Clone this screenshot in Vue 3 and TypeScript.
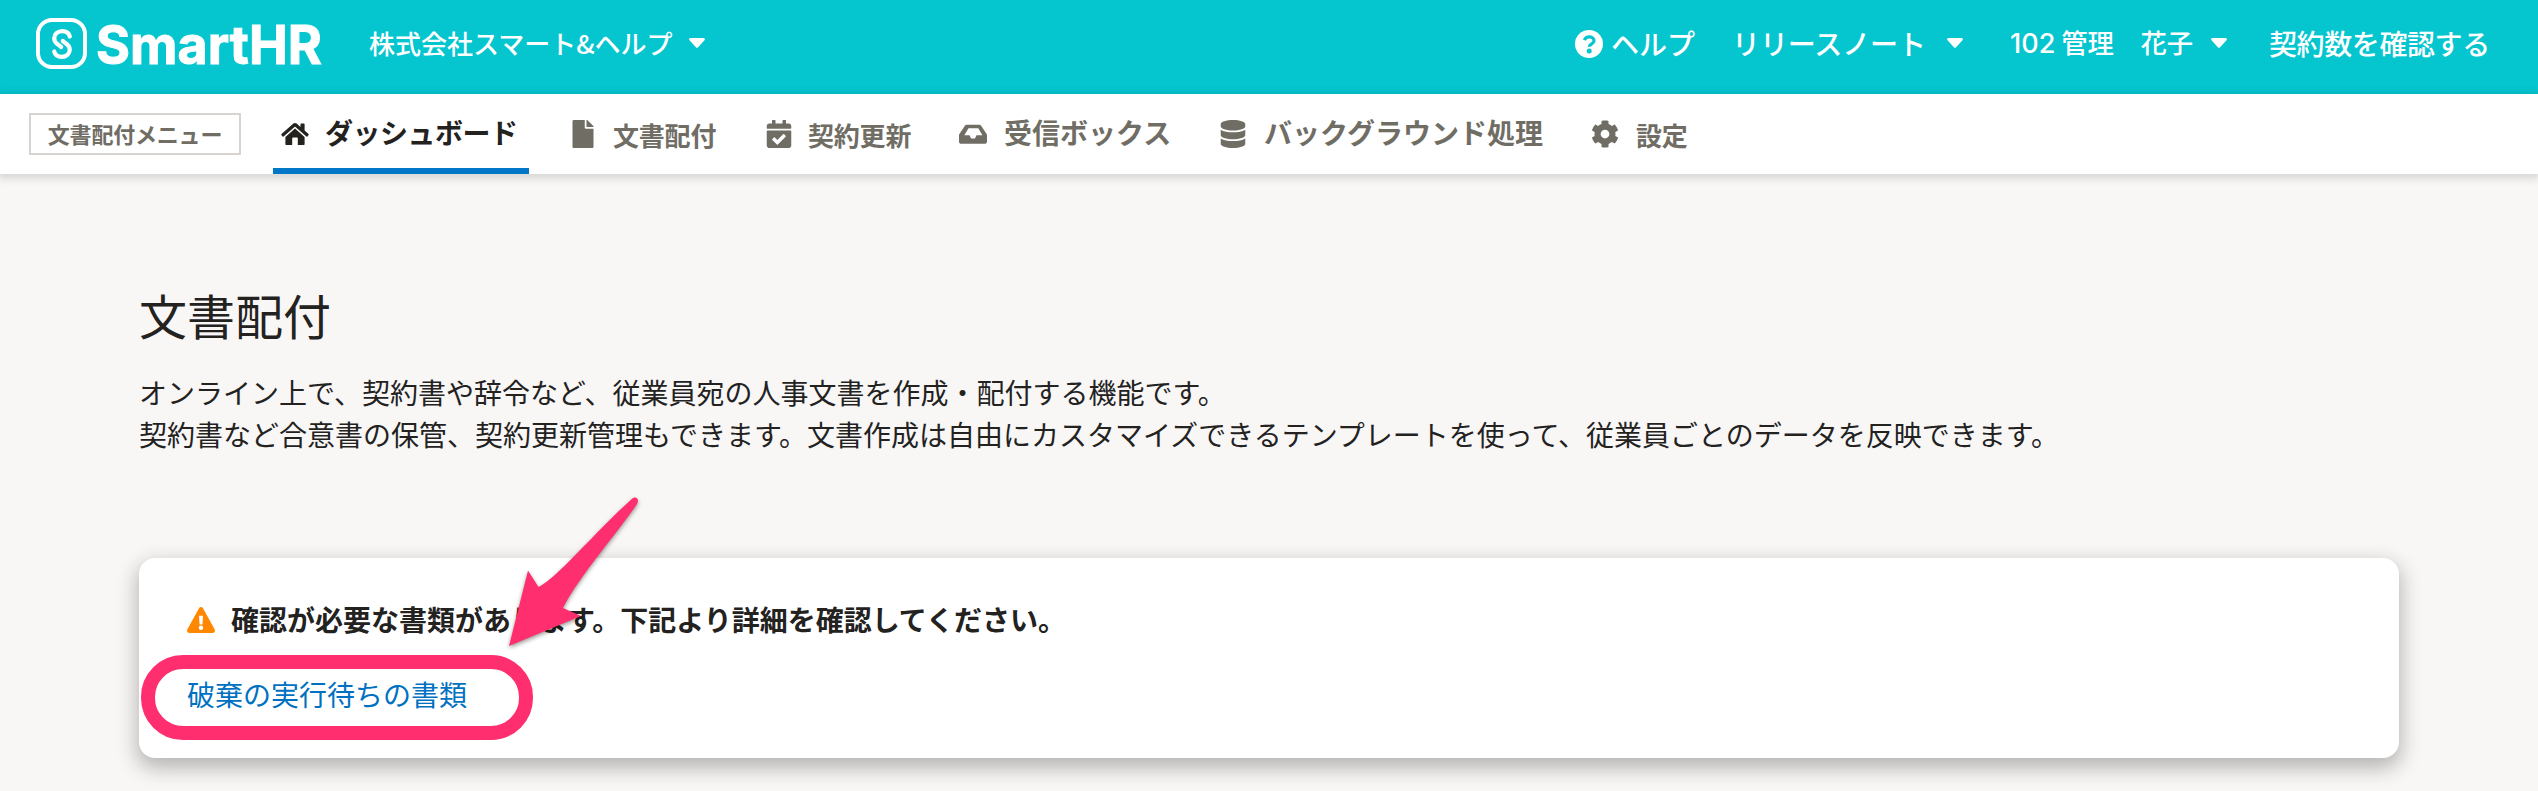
<script setup lang="ts">
interface NavItem {
  key: string
  label: string
  icon: string
  viewBox: string
  active?: boolean
}

const navItems: NavItem[] = [
  {
    key: 'dashboard',
    label: 'ダッシュボード',
    viewBox: '0 0 28 28',
    icon: 'M14 8.6 4.4 17v7.2c0 .5.3.8.8.8h6v-6.6c0-.5.3-.8.8-.8h4c.5 0 .8.3.8.8V25h6c.5 0 .8-.3.8-.8V17zM27.5 14 23.6 10.600V4.300c0-.4-.3-.7-.7-.7h-2.700c-.4 0-.7.3-.7.7v2.700l-3.900-3.400c-.9-.8-2.300-.8-3.200 0L.5 14c-.3.3-.3.7-.1 1l1.200 1.500c.3.3.7.3 1 .1L13.500 7c.3-.3.7-.3 1 0l10.900 9.600c.3.2.7.2 1-.1l1.200-1.500c.2-.3.2-.7-.1-1z',
    active: true,
  },
  {
    key: 'documents',
    label: '文書配付',
    viewBox: '0 0 384 512',
    icon: 'M224 136V0H24C10.700 0 0 10.700 0 24v464c0 13.300 10.700 24 24 24h336c13.300 0 24-10.700 24-24V160H248c-13.200 0-24-10.800-24-24zm160-14.100v6.100H256V0h6.100c6.400 0 12.500 2.500 17 7l97.900 98c4.500 4.500 7 10.600 7 16.900z',
  },
  {
    key: 'renewal',
    label: '契約更新',
    viewBox: '0 0 448 512',
    icon: 'M436 160H12c-6.600 0-12-5.400-12-12v-36c0-26.500 21.500-48 48-48h48V12c0-6.600 5.400-12 12-12h40c6.600 0 12 5.400 12 12v52h128V12c0-6.600 5.400-12 12-12h40c6.600 0 12 5.400 12 12v52h48c26.500 0 48 21.500 48 48v36c0 6.600-5.400 12-12 12zM12 192h424c6.600 0 12 5.400 12 12v260c0 26.500-21.500 48-48 48H48c-26.500 0-48-21.500-48-48V204c0-6.600 5.400-12 12-12zm333.300 95.900-28.200-28.400c-4.700-4.700-12.300-4.700-17-.1L194 364.900l-46.200-46.500c-4.700-4.700-12.300-4.700-17-.1l-28.400 28.200c-4.700 4.700-4.700 12.300-.1 17l82.600 83.300c4.700 4.700 12.300 4.700 17 .1l143.300-142.100c4.700-4.700 4.700-12.300.1-16.900z',
  },
  {
    key: 'inbox',
    label: '受信ボックス',
    viewBox: '0 0 576 512',
    icon: 'M567.900 243.900 462.200 85.400C450.300 67.600 430.300 56.900 408.900 56.900H167.100c-21.400 0-41.400 10.700-53.300 28.500L8.100 243.900A48 48 0 0 0 0 270.500V400c0 26.500 21.500 48 48 48h480c26.500 0 48-21.500 48-48V270.500c0-9.500-2.800-18.700-8.100-26.600zM360 272l-32 64h-80l-32-64h-106l85-144h202l85 144z',
  },
  {
    key: 'background',
    label: 'バックグラウンド処理',
    viewBox: '0 0 448 512',
    icon: 'M448 73.100v45.800C448 159.100 347.700 192 224 192S0 159.100 0 118.900V73.100C0 32.900 100.300 0 224 0s224 32.900 224 73.100zM448 176v102.900C448 319.100 347.700 352 224 352S0 319.100 0 278.900V176c48.100 33.100 136.200 48.600 224 48.600S399.900 209.100 448 176zm0 160v102.900C448 479.100 347.700 512 224 512S0 479.100 0 438.900V336c48.100 33.100 136.200 48.600 224 48.600S399.900 369.100 448 336z',
  },
  {
    key: 'settings',
    label: '設定',
    viewBox: '0 0 512 512',
    icon: 'M487.400 315.700l-42.600-24.600c4.300-23.200 4.300-47 0-70.200l42.600-24.600c4.900-2.800 7.100-8.600 5.500-14-11.100-35.600-30-67.800-54.700-94.600-3.800-4.100-10-5.100-14.800-2.300L380.800 110c-17.900-15.400-38.500-27.300-60.800-35.100V25.800c0-5.600-3.900-10.500-9.400-11.700-36.700-8.200-74.300-7.800-109.200 0-5.500 1.200-9.400 6.100-9.400 11.700V75c-22.200 7.900-42.800 19.800-60.800 35.100L88.700 85.500c-4.900-2.800-11-1.900-14.800 2.300-24.700 26.700-43.600 58.900-54.700 94.600-1.700 5.400.6 11.200 5.500 14L67.300 221c-4.300 23.200-4.300 47 0 70.200l-42.600 24.600c-4.900 2.800-7.100 8.600-5.500 14 11.100 35.600 30 67.800 54.700 94.600 3.800 4.100 10 5.100 14.800 2.300l42.600-24.600c17.900 15.400 38.500 27.300 60.800 35.100v49.200c0 5.600 3.900 10.500 9.400 11.700 36.700 8.200 74.300 7.800 109.200 0 5.500-1.200 9.400-6.100 9.400-11.700v-49.200c22.200-7.900 42.800-19.800 60.800-35.100l42.600 24.600c4.900 2.800 11 1.900 14.800-2.300 24.700-26.700 43.600-58.900 54.700-94.600 1.500-5.500-.7-11.300-5.600-14.100zM256 336c-44.100 0-80-35.900-80-80s35.900-80 80-80 80 35.900 80 80-35.900 80-80 80z',
  },
]
</script>

<template>
  <div class="page">
    <header class="header">
      <svg class="logo" width="290" height="80" viewBox="0 -10 290 80" role="img">
        <rect x="2" y="4" width="47" height="47" rx="14" fill="none" stroke="#fff" stroke-width="4" />
        <g fill="none" stroke="#fff" stroke-width="4.200" stroke-linecap="round">
          <path d="M33.800 20.500c-.8-3.200-3.800-5.300-7.500-5.300-4.600 0-8.100 3-8.100 7 0 2.600 1.200 4.400 3.400 6l3.600 2.800" />
          <path d="M18.200 35.500c.8 3.200 3.800 5.300 7.500 5.300 4.600 0 8.100-3 8.100-7 0-2.600-1.200-4.400-3.400-6l-3.600-2.800" />
        </g>
        <text class="logo-text" x="60" y="48" textLength="226" lengthAdjust="spacingAndGlyphs">SmartHR</text>
      </svg>
      <button class="header-item company">
        <span>株式会社スマート&amp;ヘルプ</span>
        <svg class="caret" viewBox="0 0 16 10"><path d="M1.500 0h13c1.200 0 1.900 1.300 1 2.200l-6.400 7a1.500 1.500 0 0 1-2.200 0l-6.400-7C-.4 1.300.3 0 1.500 0z" /></svg>
      </button>
      <a class="header-item help">
        <svg class="help-icon" viewBox="0 0 28 28">
          <circle cx="14" cy="14" r="14" fill="#fff" />
          <path d="M9.400 10.200C10.300 7.900 11.900 6.800 14.200 6.800c2.700 0 4.800 1.600 4.800 4 0 3.300-4.700 3.400-4.700 5.900" fill="none" stroke="#05c5cf" stroke-width="3.200" />
          <circle cx="14.200" cy="21" r="2.500" fill="#05c5cf" />
        </svg>
        <span>ヘルプ</span>
      </a>
      <button class="header-item release">
        <span>リリースノート</span>
        <svg class="caret" viewBox="0 0 16 10"><path d="M1.500 0h13c1.200 0 1.900 1.300 1 2.200l-6.400 7a1.500 1.500 0 0 1-2.200 0l-6.400-7C-.4 1.300.3 0 1.500 0z" /></svg>
      </button>
      <button class="header-item user">
        <span><span class="number">102</span> 管理　花子</span>
        <svg class="caret" viewBox="0 0 16 10"><path d="M1.500 0h13c1.200 0 1.900 1.300 1 2.200l-6.400 7a1.500 1.500 0 0 1-2.200 0l-6.400-7C-.4 1.300.3 0 1.500 0z" /></svg>
      </button>
      <a class="header-item contract"><span>契約数を確認する</span></a>
    </header>

    <nav class="nav">
      <span class="nav-title">文書配付メニュー</span>
      <a v-for="item in navItems" :key="item.key" class="nav-item" :class="[item.key, { active: item.active }]">
        <svg class="nav-icon" :viewBox="item.viewBox"><path :d="item.icon" fill-rule="evenodd" /></svg>
        <span class="nav-label">{{ item.label }}</span>
      </a>
    </nav>

    <main class="main">
      <h1>文書配付</h1>
      <p class="lead">
        オンライン上で、契約書や辞令など、従業員宛の人事文書を作成・配付する機能です。<br />契約書など合意書の保管、契約更新管理もできます。文書作成は自由にカスタマイズできるテンプレートを使って、従業員ごとのデータを反映できます。
      </p>
      <section class="card">
        <div class="notice">
          <svg class="warning" viewBox="0 0 28 26">
            <path d="M16 1.200a2.300 2.300 0 0 0-4 0L.4 22.300C-.6 24 .6 26 2.400 26h23.200c1.800 0 3-2 2-3.700z" fill="#ff8800" />
            <path d="M12 8.800h4l-.5 8.600h-3z" fill="#fff" />
            <circle cx="14" cy="20.800" r="2.200" fill="#fff" />
          </svg>
          <span class="notice-text">確認が必要な書類があります。下記より詳細を確認してください。</span>
        </div>
        <a class="link">破棄の実行待ちの書類</a>
        <div class="highlight"></div>
        <svg class="arrow" width="160" height="170" viewBox="0 0 160 170">
          <path d="M9 156 28 80.500 38.500 97C56 89 96 41 131.500 9.200c4-4 8.500-.3 5.500 4.800C116 45 80 85 63 118l18 8z" fill="#ff2e6e" />
        </svg>
      </section>
    </main>
  </div>
</template>

<style>
body {
  margin: 0;
  background: #f8f7f6;
}
</style>

<style scoped>
.page {
  box-sizing: border-box;
  width: 2538px;
  height: 791px;
  overflow: hidden;
  background: #f8f7f6;
  color: #23221f;
  font-family: 'Noto Sans CJK JP', sans-serif;
  font-size: 28px;
  white-space: nowrap;
}

.header {
  display: flex;
  align-items: center;
  box-sizing: border-box;
  height: 94px;
  padding: 0 47px 6px 36px;
  background: #05c5cf;
  color: #fff;
}

.logo {
  display: block;
  flex: none;
  margin-top: 4px;
}

.logo-text {
  font-family: Inter, sans-serif;
  font-weight: 700;
  font-size: 53px;
  fill: #fff;
  stroke: #fff;
  stroke-width: 1px;
}

.header-item {
  display: flex;
  align-items: center;
  flex: none;
  padding: 0;
  border: 0;
  background: none;
  color: #fff;
  font-family: inherit;
  font-size: 28px;
  font-weight: 500;
  line-height: 40px;
}

.header-item > span {
  margin-top: -3px;
}

.caret {
  width: 16px;
  height: 10px;
  margin-top: -2px;
  fill: #fff;
}

.company {
  width: 336px;
  margin-left: 43px;
  justify-content: space-between;
  font-size: 26px;
}

.help {
  width: 126px;
  margin-left: auto;
  gap: 8px;
}

.help-icon {
  width: 28px;
  height: 28px;
  flex: none;
}

.release {
  width: 231px;
  margin-left: 31px;
  margin-right: 2px;
  justify-content: space-between;
  letter-spacing: -0.1px;
}

.user {
  width: 217px;
  margin-left: 45px;
  justify-content: space-between;
  font-size: 26.4px;
}

.number {
  font-family: Inter, sans-serif;
  font-size: 27px;
}

.contract {
  width: 222px;
  margin-left: 42px;
  letter-spacing: -0.4px;
}

.nav {
  display: flex;
  align-items: center;
  position: relative;
  box-sizing: border-box;
  height: 80px;
  padding-left: 29px;
  background: #fff;
  box-shadow: 0 2px 8px 2px rgba(30, 28, 25, 0.16);
  color: #706d65;
  font-weight: 700;
}

.nav-title {
  box-sizing: border-box;
  width: 212px;
  height: 42px;
  border: 2px solid #d6d3d0;
  font-size: 22px;
  line-height: 36px;
  text-align: center;
  letter-spacing: -0.2px;
}

.nav-item {
  display: flex;
  align-items: center;
  box-sizing: border-box;
  height: 80px;
  font-size: 28px;
}

.nav-icon {
  flex: none;
  height: 28px;
  fill: currentColor;
}

.nav-label {
  line-height: 40px;
  margin-top: -4px;
}

.dashboard {
  width: 256px;
  margin-left: 32px;
  padding-left: 8px;
  border-bottom: 6px solid #0077c7;
  border-top: 6px solid transparent;
  letter-spacing: -0.5px;
}

.active {
  color: #23221f;
}

.dashboard .nav-icon {
  width: 28px;
  margin-right: 16px;
}

.documents {
  margin-left: 43px;
  width: 145px;
  font-size: 26px;
}

.documents .nav-icon {
  width: 22px;
  margin-right: 19px;
}

.renewal {
  width: 146px;
  margin-left: 49px;
  font-size: 26px;
}

.renewal .nav-icon {
  width: 26px;
  margin-right: 16px;
}

.inbox {
  width: 211px;
  margin-left: 47px;
}

.inbox .nav-icon {
  width: 28px;
  height: 25px;
  margin-right: 17px;
}

.background {
  width: 325px;
  margin-left: 50px;
}

.background .nav-icon {
  width: 26px;
  margin-right: 18px;
}

.settings {
  margin-left: 46px;
  font-size: 26px;
}

.settings .nav-icon {
  width: 28px;
  margin-right: 17px;
}

.documents .nav-label,
.renewal .nav-label,
.settings .nav-label {
  margin-top: 1px;
  letter-spacing: -0.2px;
}

.main {
  padding: 105px 139px 0;
}

h1 {
  margin: 0;
  font-size: 48px;
  font-weight: 400;
  line-height: 70px;
}

.lead {
  margin: 22px 0 0;
  line-height: 42px;
}

.card {
  position: relative;
  box-sizing: border-box;
  width: 2260px;
  height: 200px;
  margin-top: 103px;
  padding: 42px 48px 0;
  border-radius: 16px;
  background: #fff;
  box-shadow: 0 8px 20px 2px rgba(30, 28, 25, 0.3);
}

.notice {
  display: flex;
  align-items: center;
  gap: 16px;
  height: 40px;
  font-weight: 700;
}

.notice-text {
  margin-top: -3px;
}

.warning {
  width: 28px;
  height: 26px;
}

.link {
  display: block;
  margin-top: 34px;
  color: #0071c1;
  line-height: 40px;
}

.highlight {
  position: absolute;
  left: 2px;
  top: 97px;
  box-sizing: border-box;
  width: 392px;
  height: 85px;
  border: 14px solid #ff2e6e;
  border-radius: 42px;
}

.arrow {
  position: absolute;
  left: 361px;
  top: -68px;
  filter: drop-shadow(0 2px 2px rgba(0, 0, 0, 0.4));
}
</style>
